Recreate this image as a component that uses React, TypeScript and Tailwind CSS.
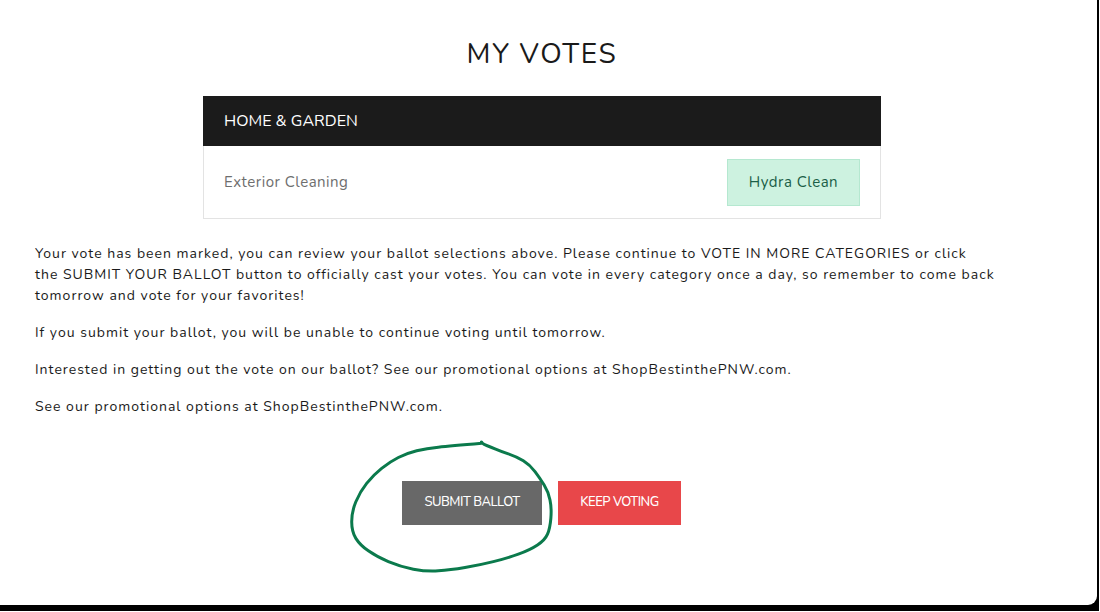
import React from "react";

const pts: [number, number][] = [
  [481.7, 443.3], [450, 446], [426.7, 448.3], [406.7, 453.3], [390, 461.7], [373.3, 475],
  [360, 491.7], [351.7, 511.7], [351.7, 531.7], [360, 545], [376.7, 556.7], [400, 566.7],
  [426.7, 571.7], [450, 570], [480, 565], [506.7, 558.3], [530, 550], [545, 540],
  [550, 528.3], [551.7, 508.3], [548.3, 491.7], [540, 478.3], [530, 465], [516.7, 456.7],
  [500, 451], [490, 446.7], [483.3, 444.3], [481.5, 442],
];

function smoothPath(p: [number, number][]) {
  let d = `M${p[0][0]},${p[0][1]}`;
  for (let i = 1; i < p.length - 1; i++) {
    const mx = (p[i][0] + p[i + 1][0]) / 2;
    const my = (p[i][1] + p[i + 1][1]) / 2;
    d += ` Q${p[i][0]},${p[i][1]} ${mx},${my}`;
  }
  const l = p[p.length - 1];
  d += ` L${l[0]},${l[1]}`;
  return d;
}

const font = { fontFamily: '"Nunito", "Open Sans", "Noto Sans", sans-serif' };

export default function App() {
  return (
    <div className="w-[1100px] h-[612px] bg-white overflow-hidden" style={font}>
      <div className="w-[1099px] h-[611px] bg-black">
        <div className="relative w-[1097px] h-[605px] bg-white rounded-br-[9px] overflow-hidden">
          <div className="w-[1084px] flex flex-col items-center pt-[36px]">
            <h1 className="text-[28px] leading-[36px] text-[#1a1a1a] tracking-[1.75px] font-normal">MY VOTES</h1>
            <div className="w-[678px] mt-[24px]">
              <div className="h-[50px] bg-[#1b1b1b] flex items-center px-[21px] text-white text-[16px]">
                HOME &amp; GARDEN
              </div>
              <div className="h-[73px] border border-t-0 border-[#e3e3e3] flex items-center justify-between pl-[20px] pr-[20px]">
                <span className="text-[15px] text-[#6e6e6e] tracking-[0.5px]">Exterior Cleaning</span>
                <div className="w-[133px] h-[47px] bg-[#cdf2e0] border border-[#b5e8d0] flex items-center justify-center text-[15px] text-[#1b5e47] tracking-[0.5px]">
                  Hydra Clean
                </div>
              </div>
            </div>
            <div className="self-stretch pl-[35px] mt-[24px] text-[14px] leading-[21px] text-[#1a1a1a] tracking-[1px] whitespace-nowrap">
              <p className="mb-4">
                Your vote has been marked, you can review your ballot selections above. Please continue to VOTE IN MORE CATEGORIES or click
                <br />
                the SUBMIT YOUR BALLOT button to officially cast your votes. You can vote in every category once a day, so remember to come back
                <br />
                tomorrow and vote for your favorites!
              </p>
              <p className="mb-4">If you submit your ballot, you will be unable to continue voting until tomorrow.</p>
              <p className="mb-4">Interested in getting out the vote on our ballot? See our promotional options at ShopBestinthePNW.com.</p>
              <p>See our promotional options at ShopBestinthePNW.com.</p>
            </div>
            <div className="flex gap-[16px] mt-[64px] pr-[1px]">
              <button className="w-[140px] h-[44px] bg-[#686868] text-white text-[13px] font-medium tracking-[-0.5px]">SUBMIT BALLOT</button>
              <button className="w-[123px] h-[44px] bg-[#e8474a] text-white text-[13px] font-medium tracking-[-0.5px]">KEEP VOTING</button>
            </div>
          </div>
          <svg className="absolute left-0 top-0 pointer-events-none" width="1097" height="605" viewBox="0 0 1097 605">
            <path d={smoothPath(pts)} fill="none" stroke="#0b7a4c" strokeWidth="3" strokeLinecap="round" strokeLinejoin="round" />
          </svg>
        </div>
      </div>
    </div>
  );
}
